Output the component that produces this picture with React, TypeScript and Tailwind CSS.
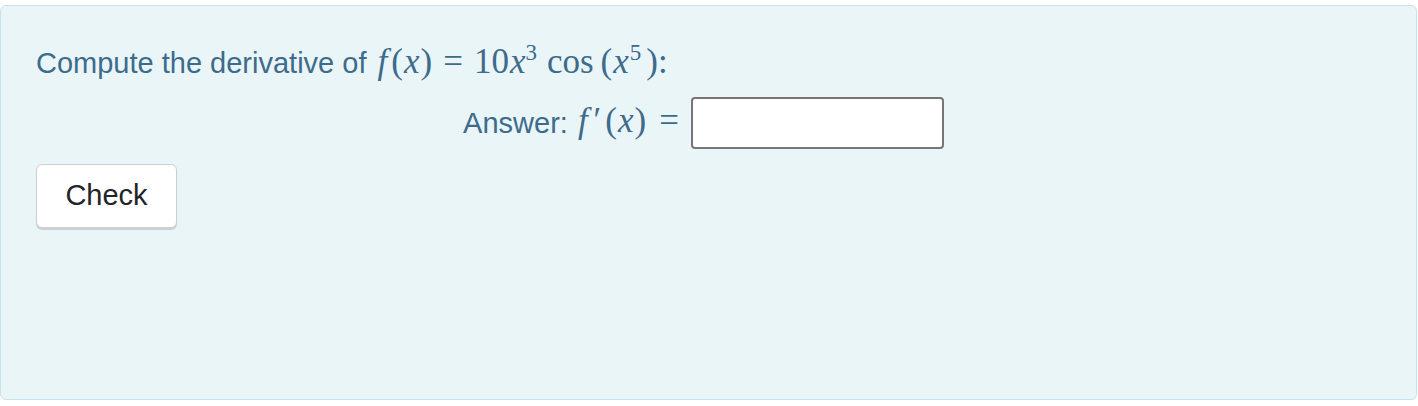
import React from "react";

const sans = { fontFamily: '"Liberation Sans", Arial, sans-serif' };

function M({ children }: { children: React.ReactNode }) {
  return (
    <span className="whitespace-nowrap text-[35px] leading-[40px]" style={{ fontFamily: '"Liberation Serif", "Times New Roman", serif' }}>
      {children}
    </span>
  );
}

export default function App() {
  return (
    <div className="h-[406px] w-[1418px] bg-white pt-[5px]" style={sans}>
      <div className="h-[395px] w-[1417px] rounded-md border border-[#c4e3ec] bg-[#eaf5f8] px-[35px] pt-[36px] text-[29px] text-[#3d6b8c]">
        <p className="leading-[40px]">
          Compute the derivative of{" "}
          <M>
            <i className="ml-[3px] mr-[4px]">f</i>(<i className="mx-[1px]">x</i>)<span className="mx-[11px]">=</span>10<i className="ml-[1px]">x</i>
            <sup className="text-[23px] -top-[0.55em]">3</sup>
            <span className="ml-[10px]">cos</span>
            <span className="ml-[7px]">(</span>
            <i className="mx-[1px]">x</i>
            <sup className="text-[23px] -top-[0.55em]">5</sup>
            <span className="ml-[5px]">)</span>:
          </M>
        </p>
        <div className="mt-[14px] flex items-center justify-center pr-[10px]">
          <span className="leading-[40px]">Answer:</span>
          <span className="ml-[10px]">
            <M>
              <i className="mr-[6px]">f</i>
              <span className="mr-[4px]">′</span>(<i className="mx-[1px]">x</i>)<span className="ml-[13px]">=</span>
            </M>
          </span>
          <input
            type="text"
            className="ml-[12px] h-[52px] w-[253px] rounded-[4px] border-2 border-[#767676] bg-white outline-none"
          />
        </div>
        <button
          type="button"
          className="mt-[15px] h-[64px] w-[141px] rounded-[6px] border border-[#cfcfcf] bg-white text-[29px] text-[#212529] shadow-[0_2px_1px_rgba(0,0,0,0.15)]"
        >
          Check
        </button>
      </div>
    </div>
  );
}
